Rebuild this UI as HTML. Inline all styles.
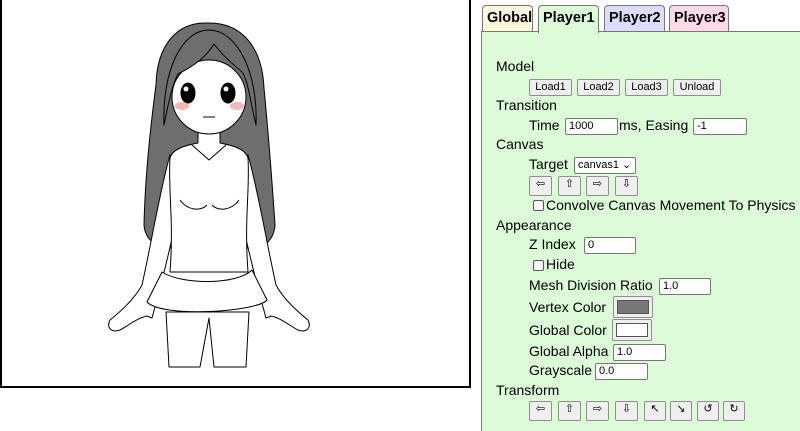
<!DOCTYPE html>
<html><head><meta charset="utf-8"><style>
*{box-sizing:border-box}
body{margin:0;width:800px;height:421px;overflow:hidden;background:#fff;font-family:"Liberation Sans",sans-serif;font-size:14px;color:#000;position:relative}
#cv{position:absolute;left:0;top:-2px;width:471px;height:390px;border:2px solid #000;border-top:none}
.tab{position:absolute;top:5px;height:27px;border:1px solid #777;border-bottom:none;border-radius:4px 4px 0 0;font-weight:bold;font-size:14.5px;padding:4px 0 0 4px}
#panel{position:absolute;left:481px;top:31px;width:330px;height:400px;background:#dcfcd8;border-left:1px solid #777;border-top:1px solid #777}
.a{position:absolute;white-space:nowrap}
.btn{position:absolute;height:17px;background:#efefef;border:1px solid #8f8f8f;border-radius:2px;font-size:11px;text-align:center;line-height:15px}
.inp{position:absolute;height:17px;background:#fff;border:1px solid #767676;border-radius:2px;font-size:11px;padding-left:3px;line-height:15px}
.cb{position:absolute;width:11px;height:11px;border:1px solid #555;border-radius:2px;background:#fff}
</style></head><body>
<div id="cv">
<svg width="469" height="388" viewBox="0 0 469 388" style="position:absolute;left:0;top:2px">
<g stroke="#000" stroke-width="1" stroke-linejoin="round">
<path d="M205 23 C175 22 155 45 154 85 C148 130 143 180 142 225 C143 240 155 248 168 248 L250 248 C262 248 272 240 273 225 C270 180 266 130 262 88 C260 45 238 22 205 23Z" fill="#6e6e6e"/>
<path d="M168 155 C158 190 150 240 140 285 C132 300 118 312 108 320 C104 328 110 333 118 330 C126 326 135 318 145 316 L150 318 C155 300 163 270 172 230 Z" fill="#fff"/>
<path d="M246 155 C256 190 264 240 274 285 C282 300 296 312 306 320 C310 328 304 333 296 330 C288 326 279 318 269 316 L264 318 C259 300 251 270 242 230 Z" fill="#fff"/>
<path d="M164 312 L167 367 L198 367 L207 318 L212 367 L244 367 L247 312Z" fill="#fff"/>
<path d="M196 128 L196 143 C180 146 170 150 168 158 C166 190 172 220 168 272 L246 272 C242 220 248 190 246 158 C244 150 234 146 218 143 L218 128Z" fill="#fff"/>
<path d="M190 145 L207 160 L224 145" fill="none"/>
<path d="M178 200 C185 210 198 212 205 205 M210 205 C217 212 230 210 237 200" fill="none"/>
<path d="M160 272 C180 285 235 285 250 270 L265 300 C255 312 160 318 145 302Z" fill="#fff"/>
<circle cx="207" cy="97" r="37" fill="#fff"/>
<path d="M162 125 C160 70 180 30 207 30 C234 30 256 70 254 125 C248 100 246 80 240 72 C228 62 218 52 212 44 C205 56 192 66 176 74 C170 85 166 105 162 125Z" fill="#6e6e6e"/>
<ellipse cx="186" cy="93" rx="7" ry="10" fill="#000"/>
<ellipse cx="226" cy="93" rx="7" ry="10" fill="#000"/>
<path d="M201 117 L213 117" fill="none"/>
</g>
<circle cx="184" cy="89" r="2.5" fill="#fff"/><circle cx="224" cy="89" r="2.5" fill="#fff"/>
<ellipse cx="180" cy="106" rx="7" ry="4" fill="#f2b8b8"/>
<ellipse cx="235" cy="106" rx="7" ry="4" fill="#f2b8b8"/>
</svg>
</div>

<div class="tab" style="left:482px;width:51px;background:#fdf8dc">Global</div>
<div class="tab" style="left:538px;width:61px;height:28px;background:#dcfcd8;z-index:2">Player1</div>
<div class="tab" style="left:604px;width:61px;background:#dcdcfc">Player2</div>
<div class="tab" style="left:669px;width:60px;background:#fcd8e8">Player3</div>

<div id="panel"></div>
<div class="a" style="left:496px;top:58px">Model</div>
<div class="btn" style="left:529px;top:79px;width:43px">Load1</div>
<div class="btn" style="left:577px;top:79px;width:43px">Load2</div>
<div class="btn" style="left:625px;top:79px;width:43px">Load3</div>
<div class="btn" style="left:673px;top:79px;width:48px">Unload</div>
<div class="a" style="left:496px;top:97px">Transition</div>
<div class="a" style="left:529px;top:117px">Time</div>
<div class="inp" style="left:565px;top:118px;width:53px">1000</div>
<div class="a" style="left:619px;top:117px">ms, Easing</div>
<div class="inp" style="left:693px;top:118px;width:54px">-1</div>
<div class="a" style="left:496px;top:136px">Canvas</div>
<div class="a" style="left:529px;top:156px">Target</div>
<div class="inp" style="left:574px;top:157px;width:62px">canvas1 ⌄</div>
<div class="btn" style="left:529px;top:176px;width:23px;height:20px">⇦</div>
<div class="btn" style="left:558px;top:176px;width:23px;height:20px">⇧</div>
<div class="btn" style="left:586px;top:176px;width:23px;height:20px">⇨</div>
<div class="btn" style="left:615px;top:176px;width:23px;height:20px">⇩</div>
<div class="cb" style="left:533px;top:200px"></div>
<div class="a" style="left:546px;top:197px">Convolve Canvas Movement To Physics</div>
<div class="a" style="left:496px;top:217px">Appearance</div>
<div class="a" style="left:529px;top:236px">Z Index</div>
<div class="inp" style="left:584px;top:237px;width:52px">0</div>
<div class="cb" style="left:533px;top:260px"></div>
<div class="a" style="left:546px;top:256px">Hide</div>
<div class="a" style="left:529px;top:277px">Mesh Division Ratio</div>
<div class="inp" style="left:659px;top:278px;width:52px">1.0</div>
<div class="a" style="left:529px;top:299px">Vertex Color</div>
<div class="btn" style="left:613px;top:296px;width:40px;height:22px;padding:3px"><div style="background:#777;height:14px;border:1px solid #555"></div></div>
<div class="a" style="left:529px;top:322px">Global Color</div>
<div class="btn" style="left:612px;top:319px;width:40px;height:22px;padding:3px"><div style="background:#fff;height:14px;border:1px solid #555"></div></div>
<div class="a" style="left:529px;top:343px">Global Alpha</div>
<div class="inp" style="left:613px;top:344px;width:53px">1.0</div>
<div class="a" style="left:529px;top:362px">Grayscale</div>
<div class="inp" style="left:595px;top:363px;width:53px">0.0</div>
<div class="a" style="left:496px;top:382px">Transform</div>
<div class="btn" style="left:529px;top:401px;width:23px;height:20px">⇦</div>
<div class="btn" style="left:558px;top:401px;width:23px;height:20px">⇧</div>
<div class="btn" style="left:586px;top:401px;width:23px;height:20px">⇨</div>
<div class="btn" style="left:615px;top:401px;width:23px;height:20px">⇩</div>
<div class="btn" style="left:644px;top:401px;width:22px;height:20px">↖</div>
<div class="btn" style="left:670px;top:401px;width:22px;height:20px">↘</div>
<div class="btn" style="left:697px;top:401px;width:22px;height:20px">↺</div>
<div class="btn" style="left:723px;top:401px;width:22px;height:20px">↻</div>
</body></html>
